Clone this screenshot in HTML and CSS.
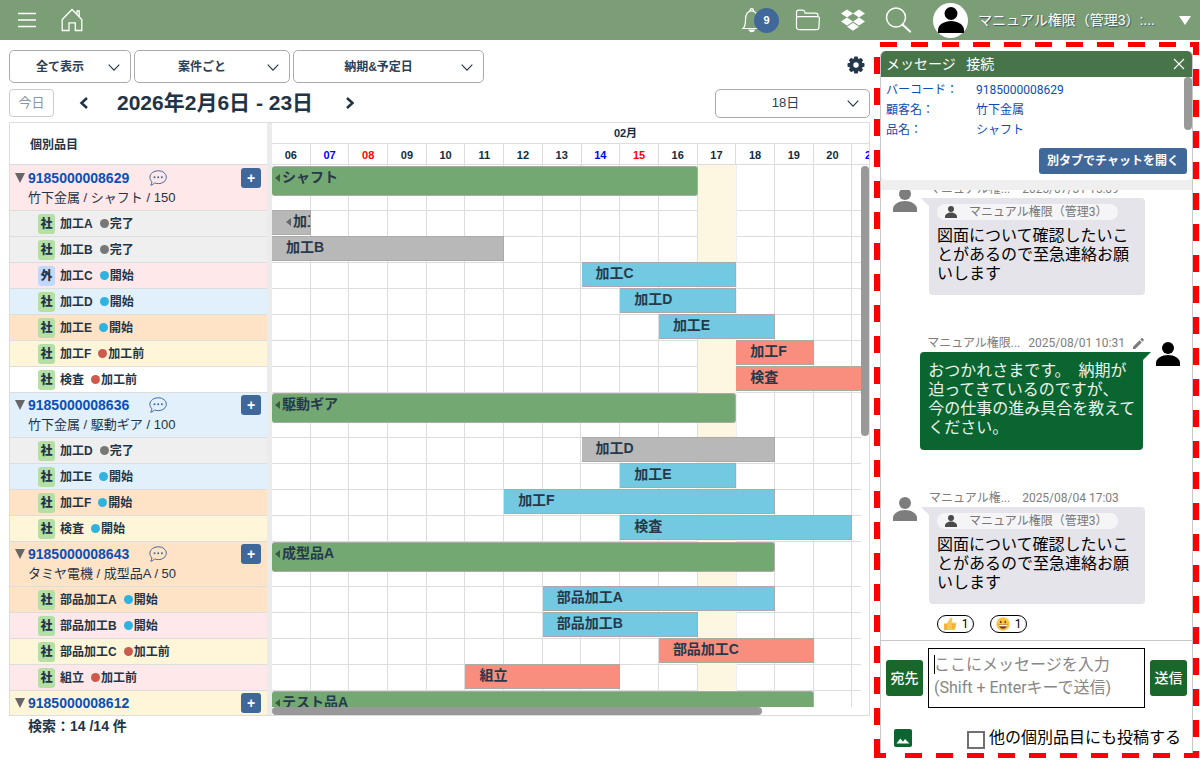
FILE: index.html
```html
<!DOCTYPE html>
<html lang="ja">
<head>
<meta charset="utf-8">
<title>工程スケジュール</title>
<link rel="stylesheet" href="styles.css">
</head>
<body>
<svg class="defs" aria-hidden="true">
  <symbol id="person" viewBox="0 0 24 24"><circle cx="12" cy="6" r="6"/><path d="M0 24v-3c0-4.500 6-8 12-8s12 3.500 12 8v3z"/></symbol>
  <symbol id="chevron" viewBox="0 0 12 7"><path d="M.7.7 6 6.100 11.300.7" fill="none" stroke="currentColor" stroke-width="1.100"/></symbol>
  <symbol id="talk" viewBox="0 0 18 16"><path d="M9.300.8c4.500 0 8 2.800 8 6.400s-3.500 6.400-8 6.400c-1.300 0-2.600-.2-3.700-.7-1 1.200-2.300 2.100-3.900 2.300.7-.9 1.100-2 1.200-3.400C1.700 10.600.9 9 .9 7.200c0-3.600 3.800-6.400 8.400-6.400z" fill="none" stroke="currentColor"/><circle cx="5.500" cy="7.300" r="1"/><circle cx="9.200" cy="7.300" r="1"/><circle cx="12.900" cy="7.300" r="1"/></symbol>
</svg>
<header class="topbar">
  <button class="icon-btn" aria-label="メニュー"><svg width="20" height="20" viewBox="0 0 20 20"><path d="M1 3.500h18M1 10h18M1 16.500h18" stroke="#fff" stroke-width="1.300"/></svg></button>
  <button class="icon-btn home" aria-label="ホーム"><svg width="22" height="24" viewBox="0 0 22 24"><path d="M1.200 11.500 11 1.500l9.800 10v11h-6.500v-7.700H8v7.700H1.200zM16 6.500V3h2.200v5.500" fill="none" stroke="#fff" stroke-width="1.300"/></svg></button>
  <div class="top-right">
    <button class="icon-btn bell" aria-label="通知"><svg width="22" height="26" viewBox="0 0 22 26"><path d="M2 21.500c2.500-2 2.500-5 2.500-9C4.500 7 7 3.800 10.500 3.800S17 7 17 12.500c0 4 1 7 3 9zM9 3.800c0-2.800 3.500-2.800 3.500 0" fill="none" stroke="#fff" stroke-width="1.200"/><path d="M7.500 22.500h6.500c-.5 3.500-6 3.500-6.500 0z" fill="#fff"/></svg><span class="badge">9</span></button>
    <button class="icon-btn folder" aria-label="フォルダ"><svg width="26" height="22" viewBox="0 0 26 22"><path d="M1.500 18.500V3.200c0-1.200.8-2 2-2h4.200c1 0 1.700.5 2 1.500l.5 1.500h10.600c1.200 0 2 .7 2 1.800v2M1.500 9.500c0-1.200.8-1.900 2-1.900h19c1.200 0 2 .7 1.900 1.900l-.5 9c0 1.300-1 2.200-2.200 2.200H4.200c-1.500 0-2.500-.8-2.700-2.200z" fill="none" stroke="#fff" stroke-width="1.200"/></svg></button>
    <button class="icon-btn" aria-label="Dropbox"><svg width="26" height="22" viewBox="0 0 26 22"><path d="m7 .5 6 4-6 4-6-4zm12 0 6 4-6 4-6-4zM7 8.500l6 4-6 4-6-4zm12 0 6 4-6 4-6-4zM13 13.800l6 4-6 4-6-4z" fill="#fff"/></svg></button>
    <button class="icon-btn search" aria-label="検索"><svg width="27" height="26" viewBox="0 0 27 26"><circle cx="11" cy="10.500" r="9.500" fill="none" stroke="#fff" stroke-width="1.500"/><path d="m17.500 17.500 7.500 7" stroke="#fff" stroke-width="2.200" stroke-linecap="round"/></svg></button>
    <button class="account"><span class="avatar"><svg width="26" height="26"><use href="#person"/></svg></span><span>マニュアル権限（管理3）:...</span><svg class="caret" width="12" height="9" viewBox="0 0 12 9"><path d="M0 0h12L6 9z" fill="#fff"/></svg></button>
  </div>
</header>
<main class="workspace">
  <section class="schedule">
    <div class="filters">
      <label class="pick w-s"><select aria-label="表示"><option>全て表示</option></select><svg><use href="#chevron"/></svg></label>
      <label class="pick w-m"><select aria-label="単位"><option>案件ごと</option></select><svg><use href="#chevron"/></svg></label>
      <label class="pick w-l"><select aria-label="日付種別"><option>納期&amp;予定日</option></select><svg><use href="#chevron"/></svg></label>
      <button class="gear" aria-label="設定"><svg width="18" height="18" viewBox="-9 -9 18 18"><g fill="#24384c"><rect x="-2" y="-8.500" width="4" height="17" rx="1"/><rect x="-2" y="-8.500" width="4" height="17" rx="1" transform="rotate(45)"/><rect x="-2" y="-8.500" width="4" height="17" rx="1" transform="rotate(90)"/><rect x="-2" y="-8.500" width="4" height="17" rx="1" transform="rotate(135)"/><circle r="6.800"/></g><circle r="2.700" fill="#fff"/></svg></button>
    </div>
    <div class="datebar">
      <button class="today">今日</button>
      <button class="step" aria-label="前へ"><svg width="10" height="12" viewBox="0 0 10 12"><path d="M8 1 2.500 6 8 11"/></svg></button>
      <h1>2026年2月6日 - 23日</h1>
      <button class="step next" aria-label="次へ"><svg width="10" height="12" viewBox="0 0 10 12"><path d="M2 1l5.500 5L2 11"/></svg></button>
      <label class="pick range"><select aria-label="期間"><option>18日</option></select><svg><use href="#chevron"/></svg></label>
    </div>
    <div class="gantt">
      <div class="items">
        <div class="items-head">個別品目</div>
        <div class="items-body">
          <div class="group pink"><div class="gline"><i class="tri"></i><a href="#">9185000008629</a><svg class="talk"><use href="#talk"/></svg><button class="plus">+</button></div><p>竹下金属 / シャフト / 150</p></div>
          <div class="task gray"><b class="chip">社</b><span>加工A</span><span class="st done">完了</span></div>
          <div class="task gray"><b class="chip">社</b><span>加工B</span><span class="st done">完了</span></div>
          <div class="task pink"><b class="chip out">外</b><span>加工C</span><span class="st run">開始</span></div>
          <div class="task blue"><b class="chip">社</b><span>加工D</span><span class="st run">開始</span></div>
          <div class="task orange"><b class="chip">社</b><span>加工E</span><span class="st run">開始</span></div>
          <div class="task yellow"><b class="chip">社</b><span>加工F</span><span class="st wait">加工前</span></div>
          <div class="task"><b class="chip">社</b><span>検査</span><span class="st wait">加工前</span></div>
          <div class="group blue"><div class="gline"><i class="tri"></i><a href="#">9185000008636</a><svg class="talk"><use href="#talk"/></svg><button class="plus">+</button></div><p>竹下金属 / 駆動ギア / 100</p></div>
          <div class="task gray"><b class="chip">社</b><span>加工D</span><span class="st done">完了</span></div>
          <div class="task blue"><b class="chip">社</b><span>加工E</span><span class="st run">開始</span></div>
          <div class="task orange"><b class="chip">社</b><span>加工F</span><span class="st run">開始</span></div>
          <div class="task yellow"><b class="chip">社</b><span>検査</span><span class="st run">開始</span></div>
          <div class="group orange"><div class="gline"><i class="tri"></i><a href="#">9185000008643</a><svg class="talk"><use href="#talk"/></svg><button class="plus">+</button></div><p>タミヤ電機 / 成型品A / 50</p></div>
          <div class="task orange"><b class="chip">社</b><span>部品加工A</span><span class="st run">開始</span></div>
          <div class="task pink"><b class="chip">社</b><span>部品加工B</span><span class="st run">開始</span></div>
          <div class="task yellow"><b class="chip">社</b><span>部品加工C</span><span class="st wait">加工前</span></div>
          <div class="task pink"><b class="chip">社</b><span>組立</span><span class="st wait">加工前</span></div>
          <div class="group yellow"><div class="gline"><i class="tri"></i><a href="#">9185000008612</a><button class="plus">+</button></div></div>
        </div>
      </div>
      <div class="timeline">
        <div class="month"><span>02月</span></div>
        <div class="days"><span>06</span><span class="sat">07</span><span class="sun">08</span><span>09</span><span>10</span><span>11</span><span>12</span><span>13</span><span class="sat">14</span><span class="sun">15</span><span>16</span><span>17</span><span>18</span><span>19</span><span>20</span><span class="sat">21</span></div>
        <div class="chart-view">
          <div class="chart">
            <div class="row tall"><div class="bar order" style="grid-column:1/12"><i class="back"></i>シャフト</div></div>
            <div class="row"><div class="bar done" style="grid-column:1/2"><i class="back"></i>加工A</div></div>
            <div class="row"><div class="bar done" style="grid-column:1/7">加工B</div></div>
            <div class="row"><div class="bar run" style="grid-column:9/13">加工C</div></div>
            <div class="row"><div class="bar run" style="grid-column:10/13">加工D</div></div>
            <div class="row"><div class="bar run" style="grid-column:11/14">加工E</div></div>
            <div class="row"><div class="bar wait" style="grid-column:13/15">加工F</div></div>
            <div class="row"><div class="bar wait" style="grid-column:13/17">検査</div></div>
            <div class="row tall"><div class="bar order" style="grid-column:1/13"><i class="back"></i>駆動ギア</div></div>
            <div class="row"><div class="bar done" style="grid-column:9/14">加工D</div></div>
            <div class="row"><div class="bar run" style="grid-column:10/13">加工E</div></div>
            <div class="row"><div class="bar run" style="grid-column:7/14">加工F</div></div>
            <div class="row"><div class="bar run" style="grid-column:10/16">検査</div></div>
            <div class="row tall"><div class="bar order" style="grid-column:1/14"><i class="back"></i>成型品A</div></div>
            <div class="row"><div class="bar run" style="grid-column:8/14">部品加工A</div></div>
            <div class="row"><div class="bar run" style="grid-column:8/12">部品加工B</div></div>
            <div class="row"><div class="bar wait" style="grid-column:11/15">部品加工C</div></div>
            <div class="row"><div class="bar wait" style="grid-column:6/10">組立</div></div>
            <div class="row tall"><div class="bar order" style="grid-column:1/15"><i class="back"></i>テスト品A</div></div>
          </div>
        </div>
        <div class="scroll-v"></div>
        <div class="scroll-h"></div>
      </div>
    </div>
    <footer class="count">検索：14 /14 件</footer>
  </section>
  <aside class="highlight">
    <div class="chat">
      <div class="chat-head"><span>メッセージ&nbsp;&nbsp; 接続</span><button aria-label="閉じる"><svg width="12" height="12" viewBox="0 0 12 12"><path d="m1 1 10 10M11 1 1 11" stroke="#fff" stroke-width="1.100"/></svg></button></div>
      <div class="info-wrap">
        <div class="info">
          <dl><dt>バーコード：</dt><dd>9185000008629</dd><dt>顧客名：</dt><dd>竹下金属</dd><dt>品名：</dt><dd>シャフト</dd></dl>
          <button class="open-tab">別タブでチャットを開く</button>
          <div class="info-scroll"></div>
        </div>
      </div>
      <div class="messages">
        <article class="msg">
          <svg class="face"><use href="#person"/></svg>
          <div class="body"><div class="meta"><span>マニュアル権...</span><time>2025/07/31 15:09</time></div>
            <div class="bubble"><div class="to"><svg><use href="#person"/></svg>マニュアル権限（管理3）</div><p>図面について確認したいこ<br>とがあるので至急連絡お願<br>いします</p></div></div>
        </article>
        <article class="msg mine">
          <div class="body"><div class="meta"><span>マニュアル権限...</span><time>2025/08/01 10:31</time><svg class="pen" viewBox="0 0 12 12"><path d="M0 9.600 7.200 2.400l2.400 2.400L2.400 12H0zM8 1.600 9.200.4c.4-.4.9-.4 1.300 0l1.100 1.100c.4.4.4.9 0 1.300L10.400 4z"/></svg></div>
            <div class="bubble"><p>おつかれさまです。&nbsp; 納期が<br>迫ってきているのですが、<br>今の仕事の進み具合を教えて<br>ください。</p></div></div>
          <svg class="face"><use href="#person"/></svg>
        </article>
        <article class="msg">
          <svg class="face"><use href="#person"/></svg>
          <div class="body"><div class="meta"><span>マニュアル権...</span><time>2025/08/04 17:03</time></div>
            <div class="bubble"><div class="to"><svg><use href="#person"/></svg>マニュアル権限（管理3）</div><p>図面について確認したいこ<br>とがあるので至急連絡お願<br>いします</p></div>
            <div class="reactions">
              <button><svg viewBox="0 0 14 14"><path d="M1 6.500h3.500v6.500H1z" fill="#f5b13a"/><path d="M4 6.500 7.300 1c1.500-.8 2.500.4 1.900 2L8.500 5.500h3.700c1.300 0 1.500 1.600.5 2 .9.500.7 1.700-.2 1.900.6.600.3 1.600-.5 1.700.3.900-.3 1.900-1.400 1.900H6.500C5.500 13 5 12.500 4 12.500z" fill="#fcc64a"/><path d="M9 7.600h3.500M9 9.500h3.200M9 11.200h2.800" stroke="#d98f24" stroke-width=".6"/></svg>1</button>
              <button><svg viewBox="0 0 14 14"><circle cx="7" cy="7" r="6.700" fill="#fcc43d"/><ellipse cx="4.700" cy="5" rx=".8" ry="1.300" fill="#6b421c"/><ellipse cx="9.300" cy="5" rx=".8" ry="1.300" fill="#6b421c"/><path d="M2.600 7.600h8.800c-.3 2.700-2 4.200-4.400 4.200S2.900 10.300 2.600 7.600z" fill="#7a3b1c"/><path d="M3 7.800h8v1.500H3z" fill="#fff"/></svg>1</button>
            </div></div>
        </article>
      </div>
      <form class="composer">
        <div class="write">
          <button type="button" class="act">宛先</button>
          <div class="field"><textarea aria-label="メッセージ" placeholder="ここにメッセージを入力&#10;(Shift + Enterキーで送信)"></textarea><i class="cursor"></i></div>
          <button type="button" class="act">送信</button>
        </div>
        <div class="extras">
          <button type="button" class="image" aria-label="画像"><svg width="18" height="18" viewBox="0 0 18 18"><path d="m2.500 14.500 3.800-5 2.700 3.300 2-2.800 4.500 4.500z" fill="#fff"/></svg></button>
          <label><input type="checkbox">他の個別品目にも投稿する</label>
        </div>
      </form>
    </div>
  </aside>
</main>
</body>
</html>
```
FILE: styles.css
```css
* { box-sizing: border-box; }
body {
  margin: 0;
  height: 100vh;
  display: flex;
  flex-direction: column;
  overflow: hidden;
  background: #fff;
  color: #1f3447;
  font: 12px/16px "Liberation Sans", "Noto Sans CJK JP", sans-serif;
}
button, select, textarea, input { font: inherit; color: inherit; margin: 0; }
button { border: 0; padding: 0; background: none; }
p, h1, dl, dd { margin: 0; }
svg { display: block; flex: none; }
.defs { position: absolute; width: 0; height: 0; }

.topbar {
  flex: none;
  height: 40px;
  display: flex;
  align-items: center;
  padding: 0 9px 0 17px;
  background: #7b9e76;
}
.home { margin-left: 24px; }
.top-right { margin-left: auto; display: flex; align-items: center; }
.bell { position: relative; margin-right: 32px; }
.badge {
  position: absolute;
  left: 13px;
  top: 1px;
  width: 25px;
  height: 25px;
  border-radius: 50%;
  background: #41689b;
  color: #fff;
  font: bold 11px/25px "Liberation Sans", sans-serif;
  text-align: center;
}
.folder { margin-right: 19px; }
.search { margin: 0 21px 0 19px; }
.account { display: flex; align-items: center; gap: 10px; color: #fff; font-size: 14px; text-shadow: 1px 1px 1px #3c5560; }
.avatar { width: 35px; height: 35px; border-radius: 50%; background: #fff; display: grid; place-items: center; color: #000; }
.avatar svg { fill: #000; }
.caret { margin-left: 14px; }

.workspace { flex: 1; min-height: 0; display: flex; }
.schedule { flex: 1; min-width: 0; display: flex; flex-direction: column; padding: 10px 4px 0 9px; }
.filters { display: flex; gap: 3px; height: 33px; }
.pick { position: relative; display: block; }
.pick select {
  appearance: none;
  width: 100%;
  height: 100%;
  padding: 0 20px 0 0;
  border: 1px solid #aaa;
  border-radius: 5px;
  background: #fff;
  color: #2c4058;
  font-weight: bold;
  text-align: center;
  text-align-last: center;
}
.pick svg { position: absolute; right: 11px; top: 50%; margin-top: -3px; width: 12px; height: 7px; pointer-events: none; }
.w-s { width: 122px; }
.w-m { width: 156px; }
.w-l { width: 191px; }
.gear { margin: 0 5px 4px auto; }
.datebar { display: flex; align-items: center; height: 30px; margin: 5px 0 4px; }
.today { width: 45px; height: 28px; border: 1px solid #ccc; border-radius: 4px; color: #8896a3; font-size: 13px; }
.step { padding: 8px; margin-left: 17px; }
.step.next { margin-left: 24px; }
.step svg { fill: none; stroke: #1f3447; stroke-width: 2.500; }
.datebar h1 { margin-left: 20px; font-size: 21px; line-height: 28px; white-space: nowrap; }
.range { width: 155px; height: 29px; margin-left: auto; }
.range select { padding-right: 14px; font-size: 13px; font-weight: normal; }

.gantt { flex: 1; min-height: 0; display: flex; border: 1px solid #ddd; }
.items { flex: none; width: 262px; border-right: 5px solid #ebebeb; display: flex; flex-direction: column; min-height: 0; }
.items-head { flex: none; height: 42px; padding: 14px 20px 0; border-bottom: 1px solid #ddd; font-weight: bold; }
.items-body { flex: 1; min-height: 0; overflow: hidden; }
.group { height: 45px; border-top: 1px solid #ddd; padding: 2px 6px 0 5px; }
.gline { display: flex; align-items: center; height: 20px; }
.group:first-child, .row:first-child { border-top-color: transparent; }
.tri { border: 5px solid transparent; border-top: 10px solid #666; border-bottom: 0; margin-right: 3px; }
.gline a { width: 121px; color: #0b4fb8; font-size: 14px; font-weight: bold; text-decoration: none; }
.talk { width: 18px; height: 16px; color: #41689b; fill: #41689b; }
.plus { width: 20px; height: 20px; margin-left: auto; border-radius: 3px; background: #40679a; color: #fff; font: bold 14px/18px "Liberation Sans", sans-serif; }
.group p { padding-left: 13px; font-size: 13px; line-height: 20px; white-space: nowrap; }
.task { height: 26px; display: flex; align-items: center; gap: 5px; padding-left: 28px; border-top: 1px solid #ddd; font-weight: bold; }
.chip { width: 17px; height: 20px; border-radius: 3px; background: #b5dfa5; line-height: 20px; text-align: center; }
.chip.out { background: #c2d8fc; }
.st { display: flex; align-items: center; gap: 1px; margin-left: 2px; }
.st::before { content: ""; width: 9px; height: 9px; border-radius: 50%; background: #777; }
.st.run::before { background: #2eb2df; }
.st.wait::before { background: #cc5a4d; }
.pink { background: #ffe8ea; }
.gray { background: #efefef; }
.blue { background: #e1f0fb; }
.orange { background: #ffe3c6; }
.yellow { background: #fff6d9; }

.timeline { position: relative; flex: 1; min-width: 0; overflow: hidden; display: flex; flex-direction: column; }
.month, .days { flex: none; width: calc(100% + 22px); font-size: 11px; font-weight: bold; color: #132b3d; text-align: center; }
.month { height: 20px; line-height: 20px; padding-left: 88px; }
.days { display: grid; grid-template-columns: repeat(16, minmax(0, 1fr)); height: 22px; line-height: 22px; border: 1px solid #ddd; border-width: 1px 0; }
.days span { border-right: 1px solid #ddd; }
.days .sat { color: #00f; }
.days .sun { color: #f00; }
.chart-view { flex: 1; min-height: 0; margin: 0 8px 8px 0; overflow: hidden; }
.chart {
  position: relative;
  width: calc(100% + 30px);
  background: repeating-linear-gradient(to right, transparent 0 calc(6.25% - 1px), #ddd calc(6.25% - 1px) 6.25%);
}
.chart::before { content: ""; position: absolute; top: 0; bottom: 0; left: 68.75%; width: 6.25%; background: #fdf6e1; border-right: 1px solid #eee; }
.row { display: grid; grid-template-columns: repeat(16, minmax(0, 1fr)); height: 26px; border-top: 1px solid #ddd; }
.bar {
  position: relative;
  height: 25px;
  margin-top: -1px;
  padding-left: 14px;
  border: 1px solid #aaa;
  border-left: 0;
  overflow: hidden;
  white-space: nowrap;
  font-size: 14px;
  line-height: 21px;
  font-weight: bold;
  color: #26394a;
}
.bar.done { background: #b8b8b8; }
.bar.run { background: #74c9e2; }
.bar.wait { background: #f98e7f; }
.row.tall { height: 45px; }
.bar.order { height: 30px; margin-top: 0; padding-left: 10px; border-radius: 3px; background: #73a873; line-height: 20px; }
.back { display: inline-block; border: 4px solid transparent; border-right: 5px solid #3c5a40; border-left: 0; margin-right: 2px; }
.order .back { margin-left: -7px; }
.bar.done .back { border-right-color: #666; }
.scroll-v { position: absolute; right: 0; top: 43px; width: 8px; height: 270px; border-radius: 4px; background: #999; }
.scroll-h { position: absolute; left: 0; bottom: 0; width: 82%; height: 8px; border-radius: 4px; background: #999; }
.count { flex: none; height: 44px; padding: 2px 19px; font-size: 14px; font-weight: bold; }

/* Dashed frame that draws attention to the chat panel */
.highlight {
  flex: none;
  width: 325px;
  margin: 2px 1px 2px 0;
  padding: 9px 6px 5px;
  background:
    repeating-linear-gradient(to right, #f00 0 17px, transparent 17px 31px) 6px 0 / 100% 5px no-repeat,
    repeating-linear-gradient(to bottom, #f00 0 17px, transparent 17px 31px) 0 15px / 6px 100% no-repeat,
    repeating-linear-gradient(to bottom, #f00 0 13px, transparent 13px 27px, #f00 27px 31px) 100% 0 / 6px 100% no-repeat,
    linear-gradient(#f00, #f00) 0 100% / 12px 5px no-repeat,
    repeating-linear-gradient(to right, #f00 0 17px, transparent 17px 31px) 31px 100% / 100% 5px no-repeat;
}
.chat { height: 100%; display: flex; flex-direction: column; border: 1px solid #c8c8c8; border-width: 0 1px; border-radius: 5px 5px 0 0; font-family: Roboto, "Noto Sans CJK JP", sans-serif; }
.chat-head { flex: none; height: 26px; display: flex; align-items: center; justify-content: space-between; padding: 0 7px 0 5px; border-radius: 5px 5px 0 0; background: #48744a; color: #fff; font-size: 14px; }
.info-wrap { flex: none; background: #efefef; padding-bottom: 10px; }
.info { position: relative; height: 103px; padding: 3px 5px 6px; background: #fff; border-radius: 0 0 5px 5px; display: flex; flex-direction: column; justify-content: space-between; align-items: flex-end; }
.info dl { width: 100%; display: grid; grid-template-columns: 90px 1fr; line-height: 20px; color: #0a4db3; }
.info dt { white-space: nowrap; }
.open-tab { width: 148px; height: 26px; border-radius: 3px; background: #40689a; color: #fff; font-weight: bold; }
.info-scroll { position: absolute; right: 0; top: 0; width: 8px; height: 53px; border-radius: 4px; background: #999; }
.messages { flex: 1; min-height: 0; overflow: hidden; display: flex; flex-direction: column; justify-content: flex-end; gap: 40px; padding: 0 12px 7px; }
.msg { display: flex; align-items: flex-start; gap: 12px; }
.face { width: 24px; height: 24px; margin-top: 7px; fill: #7d7d7d; }
.meta { display: flex; gap: 12px; height: 17px; line-height: 17px; color: #7d7d7d; white-space: nowrap; }
.bubble { position: relative; width: 216px; padding: 6px 8px 12px; border-radius: 0 4px 4px 4px; background: #e5e4ea; color: #000; font-size: 16px; line-height: 19px; white-space: nowrap; }
.bubble::before { content: ""; position: absolute; right: 100%; top: 0; border: solid transparent; border-width: 0 0 8px 8px; border-top: 8px solid #e5e4ea; border-bottom: 0; }
.to { display: flex; align-items: center; gap: 12px; width: 181px; height: 16px; margin-bottom: 6px; padding-left: 8px; border-radius: 8px; background: #f5f5f8; color: #777; font-size: 12px; }
.to svg { width: 12px; height: 12px; fill: #4a4a4a; }
.mine { justify-content: flex-end; }
.mine .face { fill: #000; }
.mine .meta { gap: 8px; padding-left: 7px; }
.mine .meta .pen { width: 11px; height: 11px; margin-top: 3px; fill: #7d7d7d; }
.mine .bubble { width: 223px; padding: 9px 7px 13px 8px; border-radius: 4px 0 4px 4px; background: #0b6530; color: #e9f4ec; }
.mine .bubble::before { right: auto; left: 100%; border-width: 8px 8px 0 0; border-top-color: #0b6530; }
.reactions { display: flex; gap: 16px; padding: 11px 8px 0; }
.reactions button { display: flex; align-items: center; justify-content: center; gap: 5px; width: 37px; height: 18px; border: 1px solid #000; border-radius: 9px; color: #000; }
.reactions svg { width: 14px; height: 14px; }
.composer { flex: none; border-top: 1px solid #c8c8c8; padding: 7px 5px 3px; color: #000; }
.write { display: flex; align-items: center; gap: 5px; }
.act { width: 37px; height: 36px; border-radius: 3px; background: #19672a; color: #fff; font-size: 14px; font-weight: 500; }
.field { position: relative; flex: 1; display: flex; }
.field textarea { width: 100%; height: 60px; padding: 4px 5px; border: 1px solid #000; border-radius: 0; resize: none; overflow: hidden; outline: 0; font-size: 16px; line-height: 23px; }
.field textarea::placeholder { color: #868686; opacity: 1; }
.cursor { position: absolute; left: 6px; top: 7px; width: 1px; height: 19px; background: #000; }
.extras { display: flex; align-items: center; justify-content: space-between; margin-top: 18px; padding: 0 6px 0 8px; font-size: 16px; line-height: 24px; }
.image { width: 18px; height: 18px; border-radius: 2px; background: #0b6530; }
.extras label { display: flex; align-items: center; gap: 4px; white-space: nowrap; }
.extras input { appearance: none; width: 18px; height: 18px; border: 2px solid #707070; background: #fff; margin-top: 3px; }
```
